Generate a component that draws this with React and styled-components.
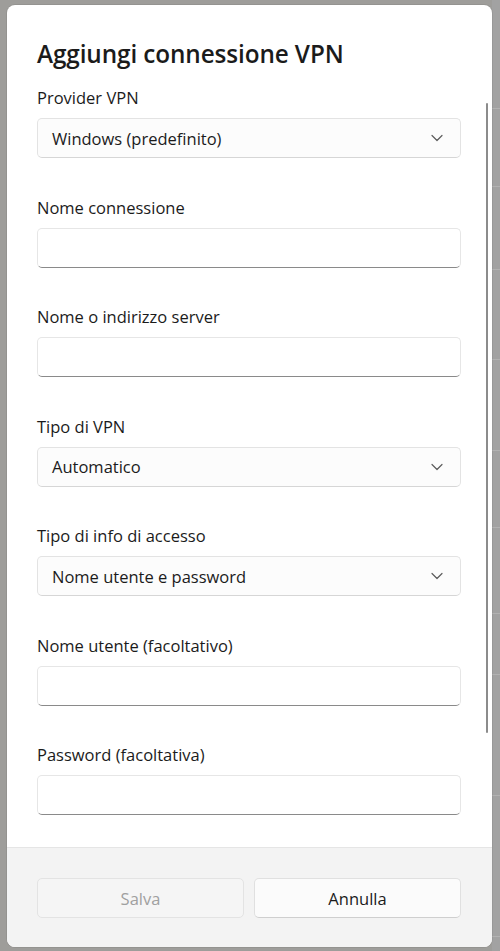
import React from "react";
import styled, { createGlobalStyle } from "styled-components";

const Global = createGlobalStyle`
  html, body { margin: 0; padding: 0; }
  body {
    width: 500px;
    height: 951px;
    overflow: hidden;
    background: #9e9d9a;
    font-family: "Open Sans", "Noto Sans", sans-serif;
  }
`;

const Page = styled.div`
  display: flex;
  width: 500px;
  height: 951px;
`;

const Dialog = styled.div`
  position: relative;
  margin: 5px 0 0 7px;
  width: 485px;
  height: 942px;
  background: #ffffff;
  border-radius: 8px;
  overflow: hidden;
  display: flex;
  flex-direction: column;
  box-shadow: 0 0 0 1px rgba(0, 0, 0, 0.06);
`;

const Backdrop = styled.div`
  flex: 1;
  background: #a2a2a2;
  display: flex;
  flex-direction: column;
`;

const BackdropRow = styled.div`
  height: ${(p) => p.h}px;
  border-bottom: 1px solid #b2b2b2;
  flex-shrink: 0;
`;

const Body = styled.div`
  flex: 1;
  min-height: 0;
  overflow: hidden;
  padding: 33px 31px 0 30px;
  display: flex;
  flex-direction: column;
`;

const Title = styled.h1`
  margin: 0 0 17px;
  font-size: 24.3px;
  font-weight: 600;
  line-height: 32px;
  color: #1b1b1b;
  letter-spacing: -0.1px;
  flex-shrink: 0;
`;

const Field = styled.div`
  display: flex;
  flex-direction: column;
  flex-shrink: 0;
  margin-bottom: 38.5px;
`;

const Label = styled.label`
  font-size: 16.5px;
  line-height: 22px;
  color: #1b1b1b;
  margin-bottom: 9px;
`;

const Combo = styled.div`
  height: 40px;
  box-sizing: border-box;
  border: 1px solid #e3e3e3;
  border-bottom-color: #d6d6d6;
  border-radius: 5px;
  background: #fcfcfc;
  display: flex;
  align-items: center;
  justify-content: space-between;
  padding: 0 17px 0 14px;
  font-size: 16.5px;
  color: #1b1b1b;
`;

const Input = styled.div`
  height: 40px;
  box-sizing: border-box;
  border: 1px solid #e6e6e6;
  border-bottom: 1px solid #8a8a8a;
  border-radius: 5px;
  background: #ffffff;
`;

const Scrollbar = styled.div`
  position: absolute;
  right: 4px;
  top: 98px;
  width: 2px;
  height: 630px;
  border-radius: 1px;
  background: #8c8c8c;
`;

const Footer = styled.div`
  height: 100px;
  flex-shrink: 0;
  background: #f3f3f3;
  border-top: 1px solid #e5e5e5;
  box-sizing: border-box;
  display: grid;
  grid-template-columns: 1fr 1fr;
  gap: 10px;
  padding: 30px 31px 0 30px;
  align-items: start;
`;

const Button = styled.button`
  height: 40px;
  box-sizing: border-box;
  border-radius: 5px;
  font-family: inherit;
  font-size: 16.5px;
  border: 1px solid ${(p) => (p.disabled ? "#e3e3e3" : "#e0e0e0")};
  border-bottom-color: ${(p) => (p.disabled ? "#e3e3e3" : "#cfcfcf")};
  background: ${(p) => (p.disabled ? "#f5f5f5" : "#fbfbfb")};
  color: ${(p) => (p.disabled ? "#a0a0a0" : "#1b1b1b")};
  padding: 0;
`;

const Chevron = () => (
  <svg width="12" height="8" viewBox="0 0 12 8" fill="none">
    <path d="M1 1.5 L6 6.5 L11 1.5" stroke="#5c5c5c" strokeWidth="1.2" strokeLinecap="round" strokeLinejoin="round" />
  </svg>
);

const fields = [
  { label: "Provider VPN", type: "combo", value: "Windows (predefinito)" },
  { label: "Nome connessione", type: "input" },
  { label: "Nome o indirizzo server", type: "input" },
  { label: "Tipo di VPN", type: "combo", value: "Automatico" },
  { label: "Tipo di info di accesso", type: "combo", value: "Nome utente e password" },
  { label: "Nome utente (facoltativo)", type: "input" },
  { label: "Password (facoltativa)", type: "input" },
];

const rows = [108, 77, 82, 89, 90, 76, 85, 60, 120, 140];

export default function App() {
  return (
    <Page>
      <Global />
      <Dialog>
        <Body>
          <Title>Aggiungi connessione VPN</Title>
          {fields.map((f) => (
            <Field key={f.label}>
              <Label>{f.label}</Label>
              {f.type === "combo" ? (
                <Combo>
                  <span>{f.value}</span>
                  <Chevron />
                </Combo>
              ) : (
                <Input />
              )}
            </Field>
          ))}
        </Body>
        <Scrollbar />
        <Footer>
          <Button disabled>Salva</Button>
          <Button>Annulla</Button>
        </Footer>
      </Dialog>
      <Backdrop>
        {rows.map((h, i) => (
          <BackdropRow key={i} h={h} />
        ))}
      </Backdrop>
    </Page>
  );
}
